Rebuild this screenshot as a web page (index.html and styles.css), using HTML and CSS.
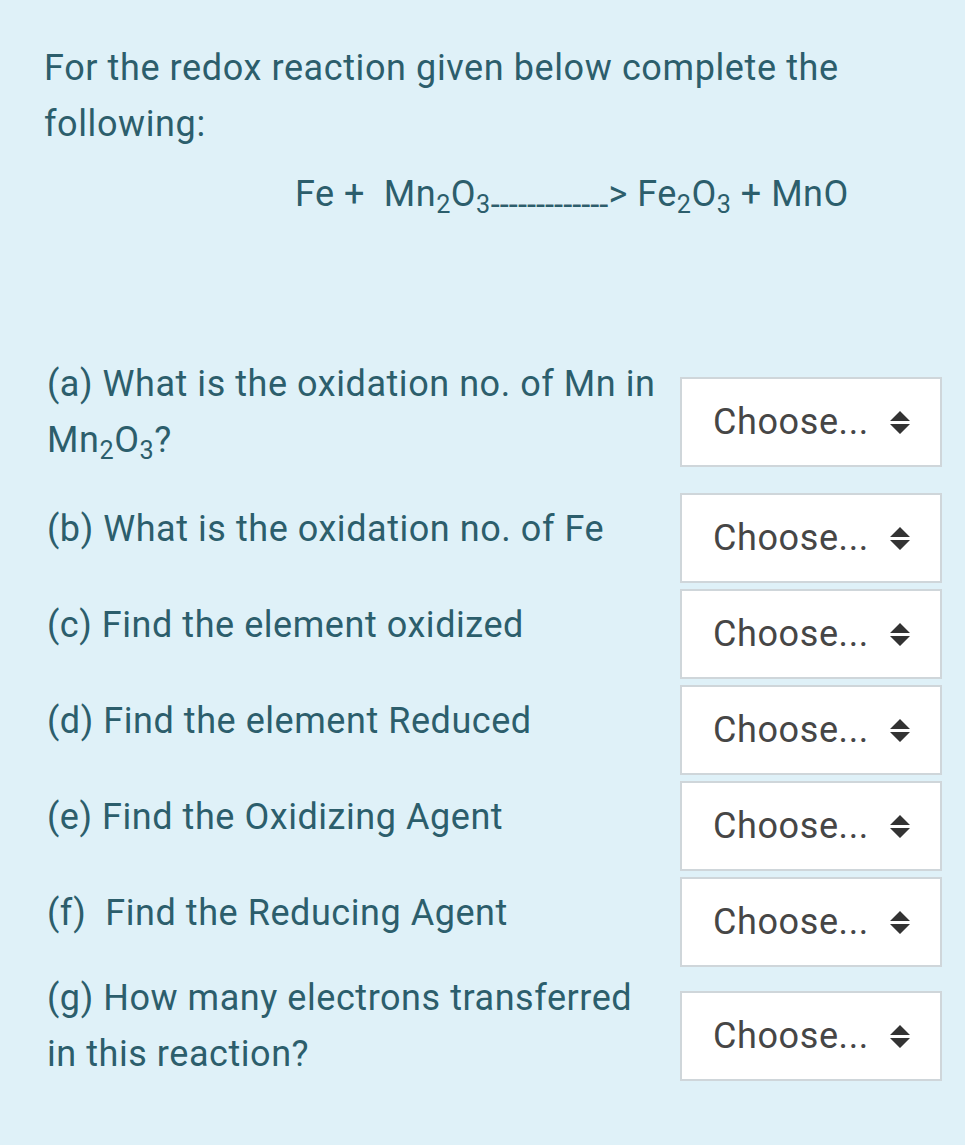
FILE: index.html
```html
<!DOCTYPE html>
<html lang="en">
<head>
<meta charset="utf-8">
<title>Redox reaction</title>
<link rel="stylesheet" href="styles.css">
</head>
<body>
<main class="page">
  <p class="intro">For the redox reaction given below complete the following:</p>
  <p class="equation">Fe +&nbsp; Mn<sub>2</sub>O<sub>3<span class="dashes">-------------</span></sub>&gt; Fe<sub>2</sub>O<sub>3</sub> + MnO</p>

  <div class="questions">
    <div class="row two first">
      <div class="label">(a) What is the oxidation no. of Mn in<br>Mn<sub>2</sub>O<sub>3</sub>?</div>
      <div class="choose"><span>Choose...</span><svg class="arrows" width="20" height="23" viewBox="0 0 20 23"><path d="M10 0 L20 10 L0 10 Z M0 13 L20 13 L10 23 Z"/></svg></div>
    </div>
    <div class="row">
      <div class="label">(b) What is the oxidation no. of Fe</div>
      <div class="choose"><span>Choose...</span><svg class="arrows" width="20" height="23" viewBox="0 0 20 23"><path d="M10 0 L20 10 L0 10 Z M0 13 L20 13 L10 23 Z"/></svg></div>
    </div>
    <div class="row">
      <div class="label">(c) Find the element oxidized</div>
      <div class="choose"><span>Choose...</span><svg class="arrows" width="20" height="23" viewBox="0 0 20 23"><path d="M10 0 L20 10 L0 10 Z M0 13 L20 13 L10 23 Z"/></svg></div>
    </div>
    <div class="row">
      <div class="label">(d) Find the element Reduced</div>
      <div class="choose"><span>Choose...</span><svg class="arrows" width="20" height="23" viewBox="0 0 20 23"><path d="M10 0 L20 10 L0 10 Z M0 13 L20 13 L10 23 Z"/></svg></div>
    </div>
    <div class="row">
      <div class="label">(e) Find the Oxidizing Agent</div>
      <div class="choose"><span>Choose...</span><svg class="arrows" width="20" height="23" viewBox="0 0 20 23"><path d="M10 0 L20 10 L0 10 Z M0 13 L20 13 L10 23 Z"/></svg></div>
    </div>
    <div class="row">
      <div class="label">(f)&nbsp; Find the Reducing Agent</div>
      <div class="choose"><span>Choose...</span><svg class="arrows" width="20" height="23" viewBox="0 0 20 23"><path d="M10 0 L20 10 L0 10 Z M0 13 L20 13 L10 23 Z"/></svg></div>
    </div>
    <div class="row two last">
      <div class="label">(g) How many electrons transferred<br>in this reaction?</div>
      <div class="choose"><span>Choose...</span><svg class="arrows" width="20" height="23" viewBox="0 0 20 23"><path d="M10 0 L20 10 L0 10 Z M0 13 L20 13 L10 23 Z"/></svg></div>
    </div>
  </div>
</main>
</body>
</html>
```

FILE: styles.css
```css
html, body {
  margin: 0;
  padding: 0;
}

body {
  background: #dff1f8;
  color: #2c5e6c;
  font-family: Roboto, "Noto Sans", "Liberation Sans", sans-serif;
  width: 965px;
  height: 1145px;
  overflow: hidden;
}

.page {
  padding: 40px 23px 0 44px;
}

.intro {
  margin: 0;
  font-size: 36px;
  letter-spacing: 0.6px;
  line-height: 56px;
  width: 840px;
}

.equation {
  margin: 14px 0 0 0;
  padding-left: 251px;
  font-size: 36px;
  letter-spacing: 0.5px;
  line-height: 56px;
  white-space: nowrap;
}

sub {
  font-size: 0.7em;
  vertical-align: -0.28em;
  line-height: 0;
}

.dashes {
  font-size: 1.3em;
  letter-spacing: 0;
  vertical-align: -3px;
}

.questions {
  margin-top: 134px;
  padding-left: 3px;
  display: flex;
  flex-direction: column;
  gap: 6px;
}

.row {
  display: flex;
  align-items: flex-start;
  justify-content: space-between;
}

.row.first {
  margin-bottom: 19px;
}

.row.last {
  margin-top: -3px;
}

.label {
  font-size: 36px;
  letter-spacing: 0.55px;
  line-height: 56px;
  white-space: nowrap;
  margin-top: 8px;
}

.row.two .label {
  margin-top: 0;
}

.choose {
  box-sizing: border-box;
  width: 262px;
  height: 90px;
  background: #ffffff;
  border: 2px solid #cfd6da;
  display: flex;
  align-items: center;
  padding-left: 31px;
  color: #464646;
  font-size: 36px;
  letter-spacing: 0.6px;
  flex: none;
}

.row.two .choose {
  margin-top: 21px;
}

.choose span {
  flex: none;
}

.arrows {
  margin-left: 21px;
  fill: #333333;
  flex: none;
}
```
